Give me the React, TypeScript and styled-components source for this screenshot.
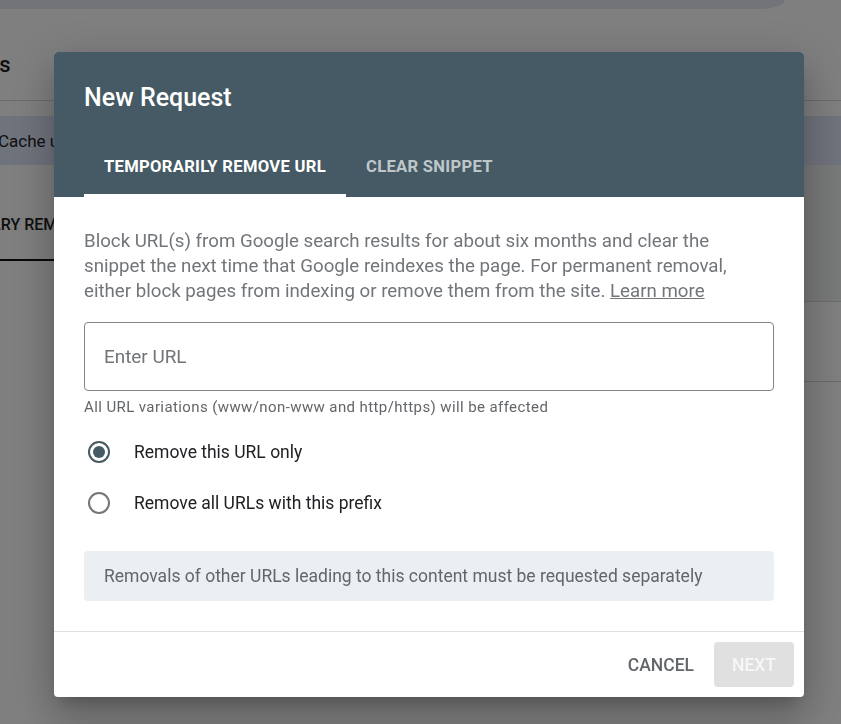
import React from 'react'
import styled, { createGlobalStyle } from 'styled-components'

const GlobalStyle = createGlobalStyle`
  html, body {
    margin: 0;
    padding: 0;
    background: #fff;
    font-family: Roboto, 'Noto Sans', Arial, sans-serif;
    overflow: hidden;
  }
  * {
    box-sizing: border-box;
  }
`

const App: React.FC = () => {
  return (
    <>
      <GlobalStyle />
      <Page>
        <SearchStrip />
        <PageHeading>
          <HeadingText>Removals</HeadingText>
        </PageHeading>
        <NoticeBand>
          <span>Cache url removal requests</span>
        </NoticeBand>
        <ContentGrid>
          <TabStrip>
            <PageTab $active>Temporary removals</PageTab>
          </TabStrip>
          <TablePanel>
            <TableHead />
            <TableRow $height={80} />
            <TableRow $height={152} />
          </TablePanel>
        </ContentGrid>
      </Page>

      <Scrim>
        <Dialog role="dialog" aria-labelledby="new-request-title">
          <DialogHeader>
            <DialogTitle id="new-request-title">New Request</DialogTitle>
            <TabList>
              <DialogTab $active>Temporarily remove URL</DialogTab>
              <DialogTab>Clear snippet</DialogTab>
            </TabList>
          </DialogHeader>

          <DialogBody>
            <Description>
              Block URL(s) from Google search results for about six months and
              clear the snippet the next time that Google reindexes the page.
              For permanent removal, either block pages from indexing or remove
              them from the site. <LearnMore href="#">Learn more</LearnMore>
            </Description>

            <UrlInput type="text" placeholder="Enter URL" />
            <Helper>
              All URL variations (www/non-www and http/https) will be affected
            </Helper>

            <RadioGroup>
              <RadioRow>
                <RadioCircle $checked>
                  <RadioDot />
                </RadioCircle>
                Remove this URL only
              </RadioRow>
              <RadioRow>
                <RadioCircle />
                Remove all URLs with this prefix
              </RadioRow>
            </RadioGroup>

            <InfoBox>
              Removals of other URLs leading to this content must be requested
              separately
            </InfoBox>
          </DialogBody>

          <DialogFooter>
            <CancelButton>Cancel</CancelButton>
            <NextButton disabled>Next</NextButton>
          </DialogFooter>
        </Dialog>
      </Scrim>
    </>
  )
}

export default App

//* Page behind the dialog *//

const Page = styled.div`
  min-height: 100vh;
  background: #fff;
  color: #202124;
`

const SearchStrip = styled.div`
  width: 785px;
  height: 9px;
  background: #e4e9f4;
  border-radius: 0 0 26px 0 / 0 0 9px 0;
`

const PageHeading = styled.div`
  height: 92px;
  display: flex;
  align-items: center;
  padding-top: 20px;
  border-bottom: 1px solid #d2d4d8;
`

const HeadingText = styled.h1`
  margin: 0 0 0 -86px;
  font-size: 22px;
  font-weight: 500;
  color: #202124;
  white-space: nowrap;
`

const NoticeBand = styled.div`
  margin-top: 15px;
  height: 49px;
  display: flex;
  align-items: center;
  background: #dfe6f9;
  font-size: 17px;
  white-space: nowrap;

  & span {
    margin-left: -2px;
  }
`

const ContentGrid = styled.div`
  display: grid;
  grid-template-columns: 1fr 320px;
`

const TabStrip = styled.div`
  display: flex;
  height: 96px;
  align-items: stretch;
`

const PageTab = styled.div<{ $active?: boolean }>`
  margin-left: -74px;
  padding: 24px 24px 0 0;
  display: flex;
  align-items: center;
  font-size: 16px;
  font-weight: 500;
  text-transform: uppercase;
  white-space: nowrap;
  color: #202124;
  border-bottom: 2px solid ${(p) => (p.$active ? '#111' : 'transparent')};
`

const TablePanel = styled.div`
  display: flex;
  flex-direction: column;
`

const TableHead = styled.div`
  height: 136px;
  background: #f1f2f3;
`

const TableRow = styled.div<{ $height: number }>`
  height: ${(p) => p.$height}px;
  border-top: 1px solid #d2d4d8;
`

//* Dialog *//

const Scrim = styled.div`
  position: fixed;
  inset: 0;
  background: rgba(0, 0, 0, 0.5);
  display: flex;
  align-items: flex-start;
  padding: 52px 37px 0 54px;
`

const Dialog = styled.div`
  width: 750px;
  background: #fff;
  border-radius: 4px;
  overflow: hidden;
  display: flex;
  flex-direction: column;
  box-shadow: 0 11px 15px -7px rgba(0, 0, 0, 0.2),
    0 24px 38px 3px rgba(0, 0, 0, 0.14), 0 9px 46px 8px rgba(0, 0, 0, 0.12);
`

const DialogHeader = styled.header`
  background: #455a64;
  padding: 30px 30px 0;
`

const DialogTitle = styled.h2`
  margin: 0 0 19px;
  font-size: 25px;
  line-height: 32px;
  font-weight: 500;
  color: #fff;
`

const TabList = styled.div`
  display: flex;
  height: 64px;
`

const DialogTab = styled.button<{ $active?: boolean }>`
  height: 64px;
  padding: 6px 20px 0;
  background: none;
  border: 0;
  border-bottom: 3px solid ${(p) => (p.$active ? '#fff' : 'transparent')};
  color: ${(p) => (p.$active ? '#fff' : 'rgba(255, 255, 255, 0.68)')};
  font-family: Roboto, sans-serif;
  font-size: 16.6px;
  font-weight: 700;
  letter-spacing: 0.3px;
  text-transform: uppercase;
  cursor: pointer;
`

const DialogBody = styled.div`
  padding: 32px 30px 30px;
`

const Description = styled.p`
  margin: 0;
  padding-right: 30px;
  font-size: 18.7px;
  line-height: 25px;
  color: #72767a;
`

const LearnMore = styled.a`
  color: inherit;
  text-decoration: underline;
`

const UrlInput = styled.input`
  display: block;
  width: 100%;
  height: 69px;
  margin-top: 18px;
  padding: 0 19px;
  border: 1px solid #80868b;
  border-radius: 4px;
  outline: none;
  font-family: Roboto, sans-serif;
  font-size: 18.9px;
  color: #202124;

  &::placeholder {
    color: #70757a;
  }
`

const Helper = styled.div`
  margin-top: 8px;
  font-size: 15px;
  letter-spacing: 0.4px;
  line-height: 16px;
  color: #62666a;
`

const RadioGroup = styled.div`
  margin-top: 11px;
  display: flex;
  flex-direction: column;
`

const RadioRow = styled.label`
  height: 51px;
  display: flex;
  align-items: center;
  gap: 24px;
  padding-left: 4px;
  font-size: 17.5px;
  color: #202124;
  cursor: pointer;
`

const RadioCircle = styled.span<{ $checked?: boolean }>`
  width: 22px;
  height: 22px;
  border-radius: 50%;
  border: 2px solid ${(p) => (p.$checked ? '#455a64' : '#757575')};
  display: flex;
  align-items: center;
  justify-content: center;
  flex-shrink: 0;
`

const RadioDot = styled.span`
  width: 12px;
  height: 12px;
  border-radius: 50%;
  background: #455a64;
`

const InfoBox = styled.div`
  margin-top: 23px;
  height: 50px;
  padding: 0 20px;
  display: flex;
  align-items: center;
  background: #eceff1;
  border-radius: 4px;
  font-size: 17.5px;
  color: #62666a;
`

const DialogFooter = styled.footer`
  height: 66px;
  border-top: 1px solid #e0e0e0;
  display: flex;
  justify-content: flex-end;
  align-items: center;
  padding: 0 10px;
`

const CancelButton = styled.button`
  height: 45px;
  padding: 0 20px;
  background: none;
  border: 0;
  border-radius: 4px;
  font-family: Roboto, sans-serif;
  font-size: 17.5px;
  font-weight: 500;
  color: #62666a;
  text-transform: uppercase;
  cursor: pointer;
`

const NextButton = styled.button`
  width: 80px;
  height: 45px;
  background: #e0e0e0;
  border: 0;
  border-radius: 4px;
  font-family: Roboto, sans-serif;
  font-size: 17.5px;
  font-weight: 500;
  color: #f7f7f7;
  text-transform: uppercase;
`
